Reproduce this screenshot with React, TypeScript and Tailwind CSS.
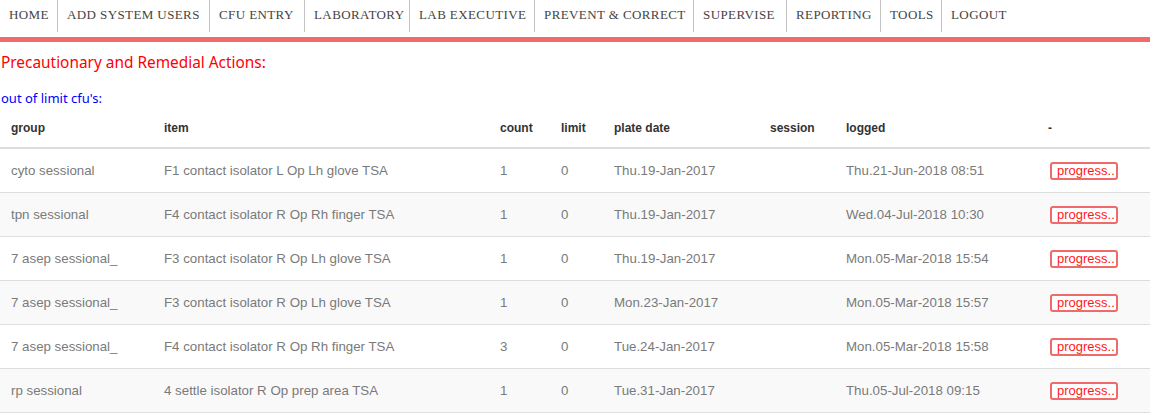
import React from "react";

const nav = [
  { t: "HOME", w: 58 },
  { t: "ADD SYSTEM USERS", w: 152 },
  { t: "CFU ENTRY", w: 95 },
  { t: "LABORATORY", w: 105 },
  { t: "LAB EXECUTIVE", w: 125 },
  { t: "PREVENT & CORRECT", w: 159 },
  { t: "SUPERVISE", w: 93 },
  { t: "REPORTING", w: 94 },
  { t: "TOOLS", w: 61 },
  { t: "LOGOUT", w: 80 },
];

const rows = [
  ["cyto sessional", "F1 contact isolator L Op Lh glove TSA", "1", "0", "Thu.19-Jan-2017", "", "Thu.21-Jun-2018 08:51"],
  ["tpn sessional", "F4 contact isolator R Op Rh finger TSA", "1", "0", "Thu.19-Jan-2017", "", "Wed.04-Jul-2018 10:30"],
  ["7 asep sessional_", "F3 contact isolator R Op Lh glove TSA", "1", "0", "Thu.19-Jan-2017", "", "Mon.05-Mar-2018 15:54"],
  ["7 asep sessional_", "F3 contact isolator R Op Lh glove TSA", "1", "0", "Mon.23-Jan-2017", "", "Mon.05-Mar-2018 15:57"],
  ["7 asep sessional_", "F4 contact isolator R Op Rh finger TSA", "3", "0", "Tue.24-Jan-2017", "", "Mon.05-Mar-2018 15:58"],
  ["rp sessional", "4 settle isolator R Op prep area TSA", "1", "0", "Tue.31-Jan-2017", "", "Thu.05-Jul-2018 09:15"],
];

const cols = ["w-[153px]", "w-[336px]", "w-[61px]", "w-[53px]", "w-[156px]", "w-[76px]", "w-[202px]", "w-[113px]"];
const heads = ["group", "item", "count", "limit", "plate date", "session", "logged", "-"];

export default function App() {
  return (
    <div className="w-[1155px] h-[413px] overflow-hidden bg-white">
      <div className="w-[1150px]">
        <div className="flex h-[32px] items-stretch">
          {nav.map((n, i) => (
            <div
              key={n.t}
              className={`flex items-center pb-[2px] pl-[9px] text-[13px] tracking-[0.4px] text-[#444] whitespace-nowrap ${i < nav.length - 1 ? "border-r border-[#c4c4c4]" : ""}`}
              style={{ width: n.w, fontFamily: '"Liberation Serif", "DejaVu Serif", serif' }}
            >
              {n.t}
            </div>
          ))}
        </div>
        <div className="mt-[5px] h-[5px] bg-[#f26b6b]" />
        <div
          className="mt-[11px] pl-[1px] text-[15.4px] leading-[20px] text-[#ff0000]"
          style={{ fontFamily: '"Noto Sans", "DejaVu Sans", sans-serif' }}
        >
          Precautionary and Remedial Actions:
        </div>
        <div
          className="mt-[17px] pl-[1px] text-[13px] leading-[16px] text-[#0000ff]"
          style={{ fontFamily: '"Noto Sans", "DejaVu Sans", sans-serif' }}
        >
          out of limit cfu's:
        </div>
        <div className="mt-[3px]" style={{ fontFamily: '"Liberation Sans", Arial, sans-serif' }}>
          <div className="flex h-[40px] items-center border-b-2 border-[#dddddd] text-[12px] font-bold text-[#333]">
            {heads.map((h, i) => (
              <div key={h} className={`${cols[i]} pl-[11px]`}>
                {h}
              </div>
            ))}
          </div>
          {rows.map((r, ri) => (
            <div
              key={ri}
              className={`flex h-[44px] items-center border-b border-[#dddddd] text-[13.3px] text-[#7a7a7a] ${ri % 2 === 1 ? "bg-[#f9f9f9]" : ""}`}
            >
              {r.map((c, ci) => (
                <div key={ci} className={`${cols[ci]} pl-[11px] whitespace-nowrap`}>
                  {c}
                </div>
              ))}
              <div className={`${cols[7]} pl-[13px]`}>
                <span className="flex h-[18px] w-[68px] items-center rounded-[3px] border-2 border-[#f06a6a] bg-white pl-[5px] text-[13px] leading-[14px] text-[#ff1a1a]">
                  progress..
                </span>
              </div>
            </div>
          ))}
        </div>
      </div>
    </div>
  );
}
